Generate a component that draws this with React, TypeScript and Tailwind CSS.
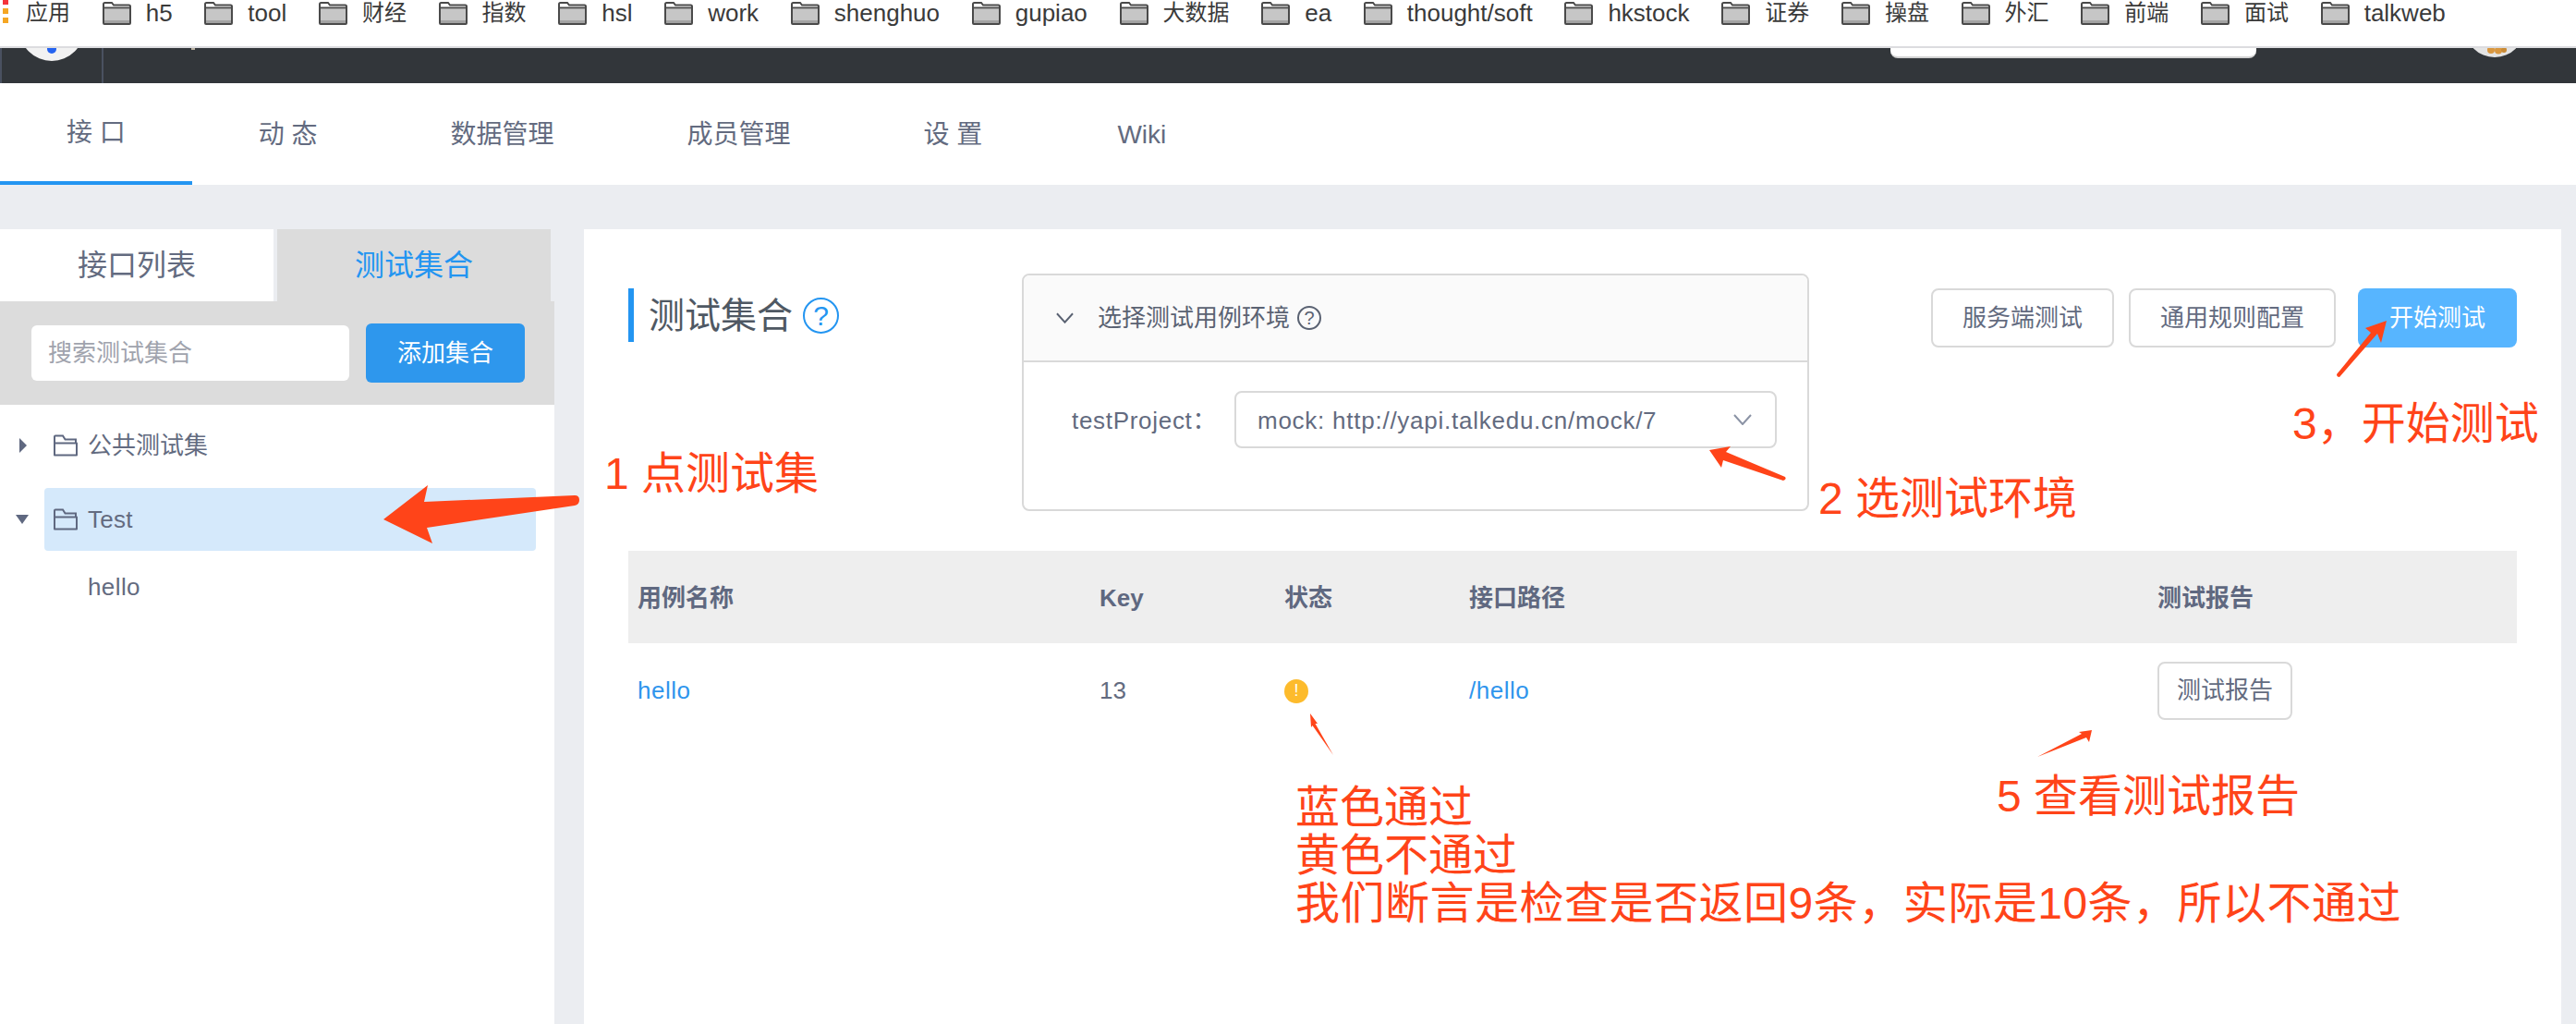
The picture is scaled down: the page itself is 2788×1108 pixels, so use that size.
const bookmarks = [
  { name: "h5" },
  { name: "tool" },
  { name: "财经", cjk: true },
  { name: "指数", cjk: true },
  { name: "hsl" },
  { name: "work" },
  { name: "shenghuo" },
  { name: "gupiao" },
  { name: "大数据", cjk: true },
  { name: "ea" },
  { name: "thought/soft" },
  { name: "hkstock" },
  { name: "证券", cjk: true },
  { name: "操盘", cjk: true },
  { name: "外汇", cjk: true },
  { name: "前端", cjk: true },
  { name: "面试", cjk: true },
  { name: "talkweb" },
];

const navItems = ["接 口", "动 态", "数据管理", "成员管理", "设 置", "Wiki"];

function FolderIcon() {
  return (
    <svg width="33" height="26" viewBox="0 0 33 26" className="shrink-0">
      <path d="M2 24V3.5Q2 2 3.5 2H11L13 4.5H29.5Q31 4.5 31 6V24Q31 25 30 25H3Q2 25 2 24Z" fill="#fff" stroke="#4a4a4a" strokeWidth="2" />
      <rect x="3" y="8" width="27" height="14" fill="#c6c6c6" />
      <rect x="3" y="21" width="27" height="3" fill="#a3a3a3" />
      <rect x="3" y="6.5" width="27" height="1.8" fill="#4a4a4a" />
    </svg>
  );
}

function TreeFolder() {
  return (
    <svg width="26" height="24" viewBox="0 0 26 24" fill="none" stroke="#5f6880" strokeWidth="2" className="shrink-0">
      <path d="M1 22V2.5Q1 1.5 2 1.5H10L12.5 5.5H24V9" />
      <path d="M1 9.5H25V22.5H1Z" strokeLinejoin="round" />
    </svg>
  );
}

function Chevron({ className }: { className: string }) {
  return (
    <svg viewBox="0 0 20 12" fill="none" stroke="currentColor" strokeWidth="2" className={className}>
      <path d="M1 1L10 11L19 1" />
    </svg>
  );
}

function Help({ className }: { className: string }) {
  return (
    <span className={`flex items-center justify-center rounded-full border-2 ${className}`}>?</span>
  );
}

function OutlineButton({ label, width }: { label: string; width: string }) {
  return (
    <button className={`h-16 rounded-[8px] border-2 border-[#d9d9d9] bg-white text-[26px] text-[#636b80] ${width}`}>
      {label}
    </button>
  );
}

export default function App() {
  return (
    <div className="relative flex h-[1108px] w-[2788px] flex-col overflow-hidden bg-[#ebedf1] font-['Liberation_Sans','Noto_Sans_CJK_SC',sans-serif]">
      {/* bookmarks */}
      <div className="flex h-[52px] shrink-0 items-start border-b-2 border-[#dcdcdf] bg-white pl-[3px] text-[#3a3a3a]">
        <div className="flex flex-col gap-1">
          <span className="-mt-px h-[6px] w-[6px] bg-[#f4343a]" />
          <span className="h-[6px] w-[6px] bg-[#f5a623]" />
          <span className="h-[6px] w-[6px] bg-[#f5a623]" />
        </div>
        <div className="ml-[19px] flex h-[28px] items-center gap-[33.7px]">
          <span className="text-[24px]">应用</span>
          {bookmarks.map(b => (
            <div key={b.name} className="flex items-center gap-[15px]">
              <FolderIcon />
              <span className={b.cjk ? "text-[24px]" : "text-[26px]"}>{b.name}</span>
            </div>
          ))}
        </div>
      </div>

      {/* dark header, scrolled under the bookmarks */}
      <div className="flex h-[38px] shrink-0 items-start bg-[#32363a]">
        <div className="h-full w-[112px] border-x-2 border-[#4a5160]">
          <svg width="108" height="38" viewBox="0 0 108 38">
            <circle cx="54" cy="-21" r="35" fill="#f2f2f2" />
            <circle cx="54" cy="1" r="5" fill="#2563f0" />
          </svg>
        </div>
        <span className="ml-[95px] h-[2px] w-[4px] bg-[#b8b0a0]" />
        <div className="ml-[1835px] h-[11px] w-[396px] rounded-b-[8px] border-b-2 border-[#d2d2d2] bg-white" />
        <svg width="46" height="10" viewBox="0 0 46 10" className="ml-[235px]">
          <circle cx="23" cy="-22" r="32" fill="#e4e4e4" />
          <circle cx="19" cy="2" r="4" fill="#d9973f" />
          <circle cx="27" cy="2.5" r="4" fill="#d9973f" />
          <circle cx="33" cy="2" r="3" fill="#c98a35" />
        </svg>
      </div>

      {/* project nav */}
      <div className="flex h-[110px] shrink-0 bg-white text-[28px] text-[#636b80]">
        {navItems.map((item, i) => (
          <div
            key={item}
            className={`flex items-center px-[72px] pt-[2px] ${i === 0 ? "border-b-4 border-[#2395f1]" : ""} ${item === "Wiki" ? "pl-[74px]" : ""}`}
          >
            {item}
          </div>
        ))}
      </div>

      <div className="flex min-h-0 flex-1 pt-12">
        {/* sidebar */}
        <aside className="w-[600px] shrink-0 bg-white">
          <div className="flex h-[78px] bg-[#ebedf1] text-[32px]">
            <div className="flex w-[296px] items-center justify-center bg-white text-[#636b80]">接口列表</div>
            <div className="ml-1 flex w-[296px] items-center justify-center bg-[#dcdcdc] text-[#2395f1]">测试集合</div>
          </div>
          <div className="flex h-[112px] items-center bg-[#dcdcdc] pl-[34px]">
            <div className="flex h-[60px] w-[344px] items-center rounded-[6px] bg-white pl-[18px] text-[26px] text-[#a0a3ad]">
              搜索测试集合
            </div>
            <button className="ml-[18px] h-16 w-[172px] rounded-[6px] bg-[#2e97ed] text-[26px] text-white">添加集合</button>
          </div>
          <div className="flex flex-col pt-[10px] text-[26px] text-[#636b80]">
            <div className="flex h-[68px] items-center">
              <svg width="10" height="16" viewBox="0 0 10 16" className="ml-[20px] mr-[18px] shrink-0">
                <path d="M1 0L9 8L1 16Z" fill="#5f6880" />
              </svg>
              <div className="ml-[10px] flex items-center gap-[11px]">
                <TreeFolder />
                <span>公共测试集</span>
              </div>
            </div>
            <div className="mt-3 flex h-[68px] items-center">
              <svg width="14" height="10" viewBox="0 0 14 10" className="ml-[17px] mr-[17px] shrink-0">
                <path d="M0 0H14L7 10Z" fill="#5f6880" />
              </svg>
              <div className="flex h-full w-[532px] items-center gap-[11px] rounded-[4px] bg-[#d5e9fb] pl-[10px]">
                <TreeFolder />
                <span className="tracking-[0.3px]">Test</span>
              </div>
            </div>
            <div className="mt-2 flex h-[62px] items-center pl-[95px] tracking-[0.4px]">hello</div>
          </div>
        </aside>

        {/* main panel */}
        <main className="ml-8 w-[2140px] shrink-0 bg-white px-12 pt-12">
          <div className="flex h-[257px] items-start">
            <div className="mt-4 flex h-[58px] w-[426px] shrink-0 items-center border-l-[6px] border-[#2395f1] pl-[16px]">
              <span className="pt-[2px] text-[39px] text-[#4f5863]">测试集合</span>
              <Help className="ml-[11px] h-[39px] w-[39px] border-[#2395f1] text-[30px] text-[#2395f1]" />
            </div>
            <div className="h-[257px] w-[852px] shrink-0 overflow-hidden rounded-[8px] border-2 border-[#d9d9d9]">
              <div className="flex h-[94px] items-center border-b-2 border-[#d9d9d9] bg-[#fafafa] text-[26px] text-[#5a6272]">
                <Chevron className="ml-[35px] h-[12px] w-[19px]" />
                <span className="ml-[26px]">选择测试用例环境</span>
                <Help className="ml-2 h-[26px] w-[26px] border-[#5a6272] text-[20px]" />
              </div>
              <div className="flex pl-[52px] pt-[31px] text-[26px] text-[#636b80]">
                <div className="flex h-[62px] w-[176px] items-center pt-[2px] tracking-[0.7px]">testProject：</div>
                <div className="flex h-[62px] w-[587px] items-center justify-between rounded-[8px] border-2 border-[#d9d9d9] pl-[23px] pr-[25px]">
                  <span className="pt-[2px] tracking-[0.75px]">mock: http://yapi.talkedu.cn/mock/7</span>
                  <Chevron className="h-[12px] w-[20px] text-[#8b93a5]" />
                </div>
              </div>
            </div>
            <div className="ml-auto mt-4 flex">
              <OutlineButton label="服务端测试" width="w-[198px]" />
              <div className="ml-4">
                <OutlineButton label="通用规则配置" width="w-[224px]" />
              </div>
              <button className="ml-6 h-16 w-[172px] rounded-[8px] bg-[#57b5ff] text-[26px] text-white">开始测试</button>
            </div>
          </div>

          <div className="mt-[43px]">
            <div className="grid h-[100px] grid-cols-[500px_200px_200px_745px_1fr] items-center bg-[#eeeeee] pl-[10px] pt-[2px] text-[26px] font-bold text-[#5f6880]">
              <div>用例名称</div>
              <div>Key</div>
              <div>状态</div>
              <div>接口路径</div>
              <div>测试报告</div>
            </div>
            <div className="grid grid-cols-[500px_200px_200px_745px_1fr] items-center py-5 pl-[10px] text-[26px] text-[#636b80]">
              <div className="tracking-[0.5px] text-[#2f95ed]">hello</div>
              <div>13</div>
              <div>
                <span className="flex h-[26px] w-[26px] items-center justify-center rounded-full bg-[#fdbb2c] text-[18px] text-white">!</span>
              </div>
              <div className="tracking-[0.5px] text-[#2f95ed]">/hello</div>
              <div>
                <button className="h-[63px] w-[146px] rounded-[8px] border-2 border-[#d9d9d9] bg-white text-[26px] text-[#636b80]">测试报告</button>
              </div>
            </div>
          </div>
        </main>
      </div>

      {/* annotations drawn over the screenshot */}
      <svg width="2788" height="1108" viewBox="0 0 2788 1108" fill="#ff4419" className="pointer-events-none absolute left-0 top-0">
        <path d="M415 562L463 525L459 543L622 536Q627 536 627 541Q627 546 622 547L462 571L468 588Z" />
        <path d="M1850 487L1873 483L1868 489L1932 516Q1934 519 1930 520L1865 498L1863 506Z" />
        <path d="M2583 347L2577 371L2573 361L2532 408Q2529 408 2529 405L2566 360L2560 355Z" />
        <path d="M1418 772L1426 783L1423.5 783L1443 817L1420.5 785L1419 787Z" />
        <path d="M2264 790L2261 803L2258 798L2205 819L2253 794L2250 792Z" />
      </svg>
      <div className="absolute left-[654px] top-[488px] text-[48px] leading-[50px] text-[#ff4419]">1 点测试集</div>
      <div className="absolute left-[1968px] top-[515px] text-[48px] leading-[50px] text-[#ff4419]">2 选测试环境</div>
      <div className="absolute left-[2481px] top-[434px] text-[48px] leading-[50px] text-[#ff4419]">3，开始测试</div>
      <div className="absolute left-[2161px] top-[837px] text-[48px] leading-[50px] text-[#ff4419]">5 查看测试报告</div>
      <div className="absolute left-[1402px] top-[848px] whitespace-nowrap text-[48px] leading-[52px] text-[#ff4419]">
        <div>蓝色通过</div>
        <div>黄色不通过</div>
        <div className="tracking-[0.5px]">我们断言是检查是否返回9条，实际是10条，所以不通过</div>
      </div>
    </div>
  );
}
